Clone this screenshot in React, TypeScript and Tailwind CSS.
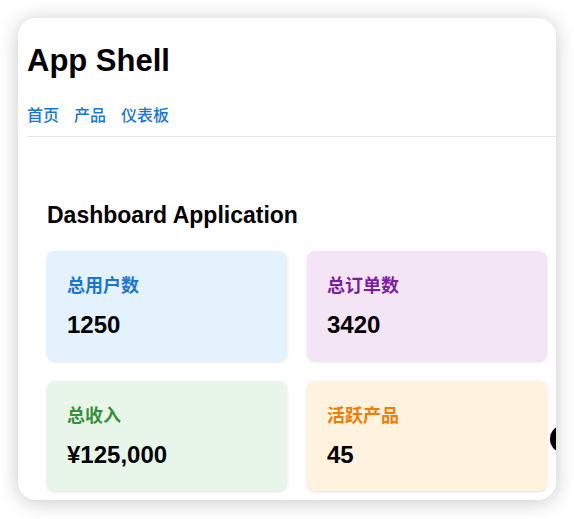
const stats = [
  { label: '总用户数', value: '1250', bg: 'bg-[#e3f2fd]', fg: 'text-[#1976d2]' },
  { label: '总订单数', value: '3420', bg: 'bg-[#f3e5f5]', fg: 'text-[#7b1fa2]' },
  { label: '总收入', value: '¥125,000', bg: 'bg-[#e8f5e9]', fg: 'text-[#388e3c]' },
  { label: '活跃产品', value: '45', bg: 'bg-[#fff3e0]', fg: 'text-[#f57c00]' },
]

function StatCard({ label, value, bg, fg }: (typeof stats)[number]) {
  return (
    <div className={`${bg} rounded-lg px-5 pt-[22px] pb-[18px] shadow-[0_1px_3px_rgba(0,0,0,0.12)]`}>
      <div className={`${fg} text-[18px] leading-[26px] font-semibold`}>{label}</div>
      <div className="mt-2 text-[24px] leading-[36px] font-semibold text-black">{value}</div>
    </div>
  )
}

export default function App() {
  return (
    <div className="min-h-[519px] bg-white p-[18px] font-['Liberation_Sans','Noto_Sans_CJK_SC',sans-serif]">
      <div className="relative h-[482px] w-[538px] overflow-hidden rounded-[18px] bg-white pl-[9px] pt-6 shadow-[0_2px_20px_rgba(0,0,0,0.22)]">
        <header className="border-b border-[#e5e5e5] pb-2">
          <h1 className="text-[31px] leading-[38px] font-bold text-black">App Shell</h1>
          <nav className="mt-6 flex gap-[15px] text-[16px] leading-6 font-medium text-[#1976d2]">
            <a href="#">首页</a>
            <a href="#">产品</a>
            <a href="#">仪表板</a>
          </nav>
        </header>
        <main className="w-[540px] pl-5 pt-[61px]">
          <h2 className="mb-[19px] text-[23px] leading-[34px] font-bold text-black">Dashboard Application</h2>
          <div className="grid w-[500px] grid-cols-2 gap-5">
            {stats.map((s) => (
              <StatCard key={s.label} {...s} />
            ))}
          </div>
        </main>
        <div className="absolute left-[532px] top-[407px] h-7 w-7 rounded-full bg-black" />
      </div>
    </div>
  )
}
